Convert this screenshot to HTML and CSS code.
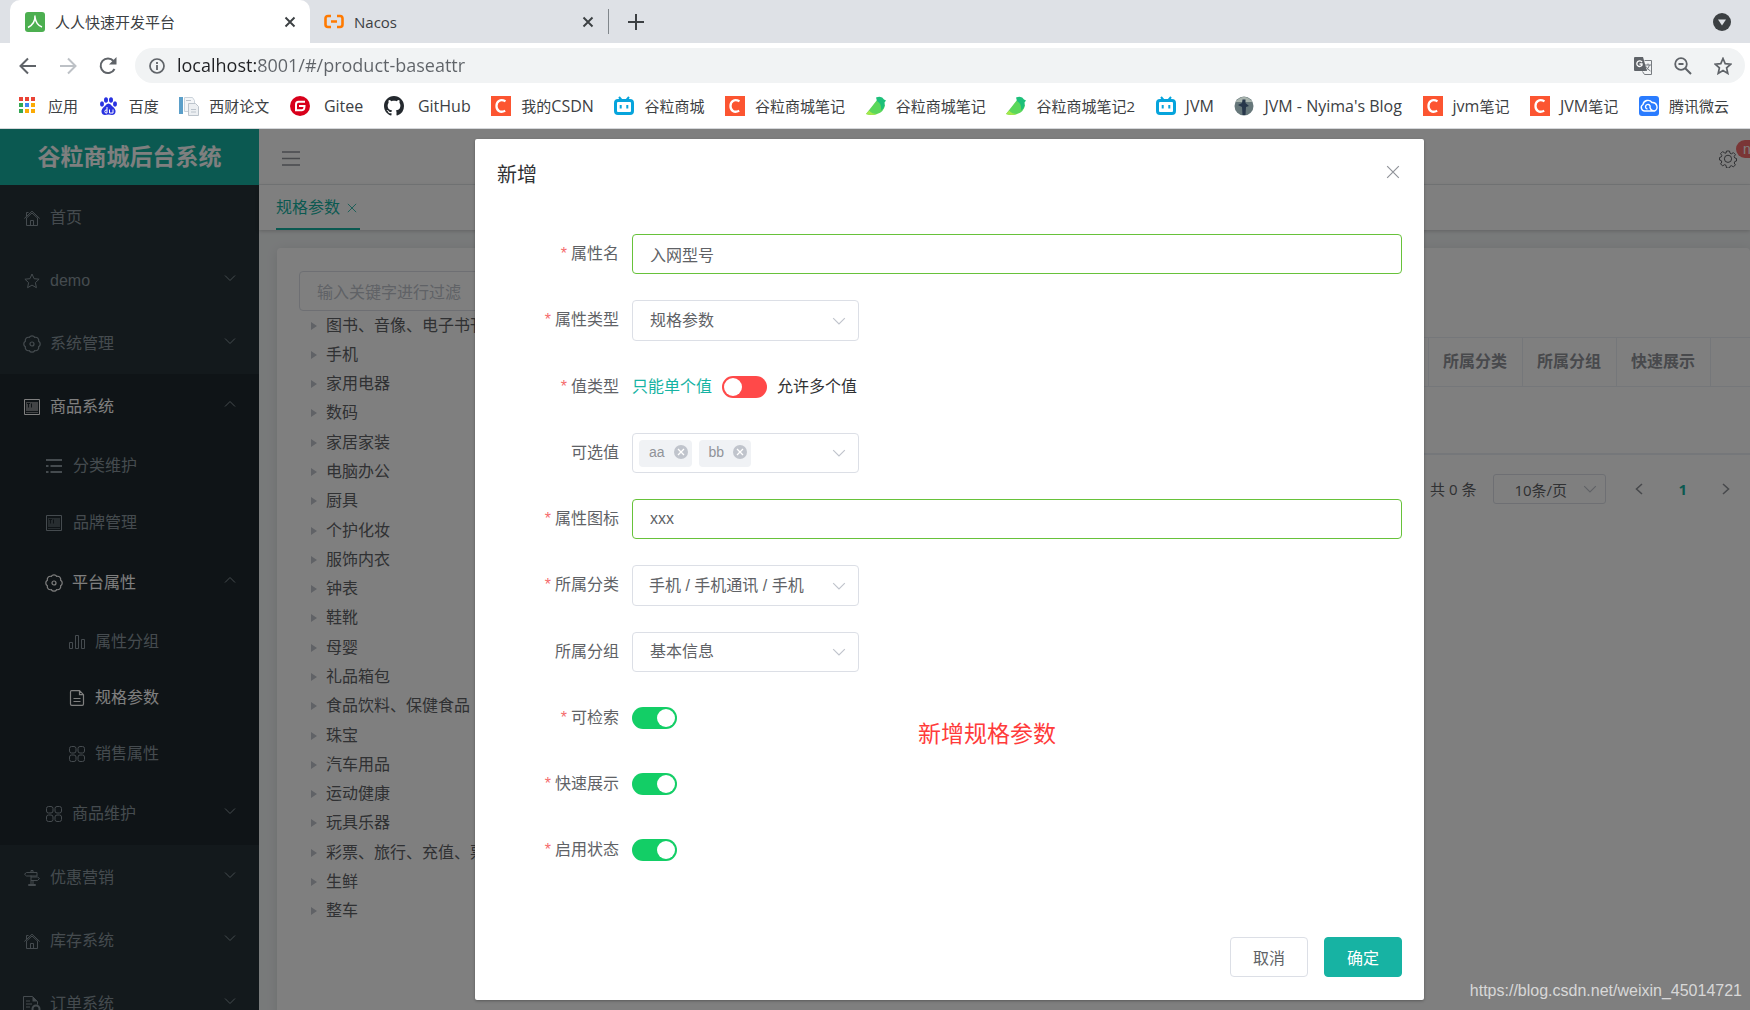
FILE: index.html
```html
<!DOCTYPE html>
<html lang="zh-CN">
<head>
<meta charset="utf-8">
<title>人人快速开发平台</title>
<link rel="stylesheet" href="styles.css">
</head>
<body>
<svg class="sprite" aria-hidden="true">
  <symbol id="chevron" viewBox="0 0 12 12"><path d="M1 3.500l5 5 5-5" fill="none" stroke="currentColor" stroke-width="1"/></symbol>
  <symbol id="cross" viewBox="0 0 12 12"><path d="M1 1l10 10M11 1L1 11" fill="none" stroke="currentColor" stroke-width="1"/></symbol>
  <symbol id="cross-bold" viewBox="0 0 12 12"><path d="M1.500 1.500l9 9M10.500 1.500l-9 9" fill="none" stroke="currentColor" stroke-width="1.900"/></symbol>
  <symbol id="home" viewBox="0 0 16 16"><path d="M.3 8.500L8 1.200l7.700 7.300M2 8.500L8 3l6 5.500M2.500 8v7.500h11V8M6.500 15.500v-5h3v5M2.500 6V2.500h2" fill="none" stroke="currentColor"/></symbol>
  <symbol id="star" viewBox="0 0 16 16"><path d="M8 1l2.100 4.700 5 .5-3.700 3.400 1 5.100L8 12.100l-4.400 2.600 1-5.100L.9 6.200l5-.5z" fill="none" stroke="currentColor"/></symbol>
  <symbol id="gear" viewBox="0 0 18 18"><path d="M15.650 11.750A3.200 3.200 0 0 1 11.750 15.650A3.200 3.200 0 0 1 6.250 15.650A3.200 3.200 0 0 1 2.350 11.750A3.200 3.200 0 0 1 2.350 6.250A3.200 3.200 0 0 1 6.250 2.350A3.200 3.200 0 0 1 11.750 2.350A3.200 3.200 0 0 1 15.650 6.250A3.200 3.200 0 0 1 15.650 11.750z" fill="none" stroke="currentColor" stroke-width="1.200"/><circle cx="9" cy="9" r="2" fill="none" stroke="currentColor" stroke-width="1.200"/></symbol>
  <symbol id="cog" viewBox="0 0 18 18"><path d="M7.500 1h3l.5 2.200 1.500.6 1.900-1.200 2 2-1.200 1.900.6 1.500 1.700.5v2.500l-1.700.5-.6 1.500 1.200 1.900-2 2-1.900-1.200-1.500.6-.5 1.700h-3L7 15.300l-1.500-.6-1.900 1.200-2-2 1.200-1.900-.6-1.500-1.700-.5V7.500L2.200 7l.6-1.500-1.200-1.900 2-2 1.900 1.200L7 3.200z" fill="none" stroke="currentColor" stroke-linejoin="round"/><circle cx="9" cy="8.800" r="3.600" fill="none" stroke="currentColor"/></symbol>
  <symbol id="news" viewBox="0 0 16 16"><path d="M.5.5h15v15H.5z" fill="none" stroke="currentColor"/><path d="M2 3h12v9H2zM2 13h12v1H2z" fill="currentColor" opacity=".45"/><path d="M3 4.500h3M4.500 5v3.500M7.500 4.500v4" stroke="#1f292e"/></symbol>
  <symbol id="list" viewBox="0 0 16 16"><path d="M0 1h16v2H0zM0 7h2.500v2H0zM4.500 7H16v2H4.500zM0 13h2.500v2H0zM4.500 13H16v2H4.500z" fill="currentColor"/></symbol>
  <symbol id="bars" viewBox="0 0 16 16"><path d="M.5 8.500h3v6h-3zM6.500 1.500h3v13h-3zM12.500 5.500h3v9h-3z" fill="none" stroke="currentColor" stroke-linejoin="round"/></symbol>
  <symbol id="doc" viewBox="0 0 16 16"><path d="M2.500.7h8l4 4V14q0 1.300-1.300 1.300H2.800Q1.500 15.300 1.500 14V2q0-1.300 1-1.300zM10.500.7v4h4M4.500 8.500h7M4.500 11.500h7" fill="none" stroke="currentColor" stroke-width="1.200"/></symbol>
  <symbol id="grid" viewBox="0 0 16 16"><g fill="none" stroke="currentColor"><rect x=".5" y=".5" width="6.500" height="6.500" rx="2"/><rect x="9" y=".5" width="6.500" height="6.500" rx="2"/><rect x=".5" y="9" width="6.500" height="6.500" rx="2"/><rect x="9" y="9" width="6.500" height="6.500" rx="2"/></g></symbol>
  <symbol id="sign" viewBox="0 0 16 16"><path d="M7 2.500V.5h2v2M7 5.500v9M9 10.500v4M4.500 15.500h7v-1h-7zM2.500 2.500H13V6H2.500L.5 4.200zM7 7h6.500l2 1.500-2 2H7" fill="none" stroke="currentColor"/></symbol>
  <symbol id="order" viewBox="0 0 18 16"><path d="M7 15.500H.5V.5h9l5 5v3M3 5h4M3 8h6M3 11h4" fill="none" stroke="currentColor"/><path d="M9.500.5v5h5z" fill="currentColor"/><circle cx="13" cy="13" r="3.500" fill="none" stroke="currentColor" stroke-width="2"/></symbol>
  <symbol id="csdn" viewBox="0 0 20 20"><path d="M0 0h20v20H0z" fill="#fc5531"/><path d="M14.500 5.200C9 2.500 5.500 5.500 5.500 10s3.500 7.300 8.700 4.800" fill="none" stroke="#fff" stroke-width="2.300"/></symbol>
  <symbol id="bili" viewBox="0 0 20 20"><rect x="1.500" y="4.500" width="17" height="13" rx="2.500" fill="none" stroke="#06a4dc" stroke-width="3"/><path d="M5 1l2.500 3M15 1l-2.500 3" stroke="#06a4dc" stroke-width="2"/><path d="M6.700 9v3.500M13.300 9v3.500" stroke="#06a4dc" stroke-width="2"/></symbol>
  <symbol id="bird" viewBox="0 0 20 20"><path d="M11 4L0 18q6 2 11 0 7-2 8-9z" fill="#5bd75b"/><path d="M10 1.500q6-2 8 2l2 1-1.500 2q1 5-3.500 8Q16 8 11 5z" fill="#1dc07a"/><path d="M3 14.500L0 18q6 2 11 0-5 0-8-3.500z" fill="#a6e84a"/></symbol>
</svg>

<header class="browser">
  <div class="tabs">
    <div class="tab tab-active">
      <svg class="favicon" viewBox="0 0 20 20"><rect width="20" height="20" rx="3" fill="#4caf50"/><path d="M10 3.500q.5 8-7 12M10 5q1 8 7 10" fill="none" stroke="#fff" stroke-width="1.500"/></svg>
      <span class="tab-title">人人快速开发平台</span>
      <button class="plain tab-close" aria-label="关闭标签页"><svg class="ico12"><use href="#cross-bold"/></svg></button>
    </div>
    <div class="tab">
      <svg class="favicon" viewBox="0 0 20 20"><path d="M7 4H4Q1.500 4 1.500 6.500v6Q1.500 15 4 15h3M13 4h3q2.500 0 2.500 2.500v6Q18.500 15 16 15h-3M7 9.500h6" fill="none" stroke="#ff7a00" stroke-width="2.600"/></svg>
      <span class="tab-title">Nacos</span>
      <button class="plain tab-close" aria-label="关闭标签页"><svg class="ico12"><use href="#cross-bold"/></svg></button>
    </div>
    <span class="tab-rule"></span>
    <button class="plain new-tab" aria-label="新标签页"><svg width="16" height="16"><path d="M8 0v16M0 8h16" stroke="#3c4043" stroke-width="2"/></svg></button>
    <button class="plain tab-search" aria-label="搜索标签页"><svg width="18" height="18"><circle cx="9" cy="9" r="9" fill="#3c4043"/><path d="M5 6.500h8L9 12.500z" fill="#dee1e6"/></svg></button>
  </div>
  <div class="toolbar">
    <button class="plain nav-btn" aria-label="后退"><svg width="18" height="18"><path d="M17 9H2M9 1.500L1.500 9 9 16.500" fill="none" stroke="#5f6368" stroke-width="2"/></svg></button>
    <button class="plain nav-btn" aria-label="前进"><svg width="18" height="18"><path d="M1 9h15M9 1.500L16.500 9 9 16.500" fill="none" stroke="#bdc1c6" stroke-width="2"/></svg></button>
    <button class="plain nav-btn" aria-label="重新加载"><svg width="18" height="18"><path d="M15.500 12A7.300 7.300 0 1 1 14.500 4" fill="none" stroke="#5f6368" stroke-width="2"/><path d="M17.500 0v7.500H10z" fill="#5f6368"/></svg></button>
    <div class="omnibox">
      <svg width="16" height="16"><circle cx="8" cy="8" r="7" fill="none" stroke="#5f6368" stroke-width="1.700"/><path d="M8 7v5M8 4v2" stroke="#5f6368" stroke-width="1.800"/></svg>
      <input class="url" aria-label="地址" value="localhost:8001/#/product-baseattr">
      <button class="plain" aria-label="翻译"><svg width="18" height="18"><path d="M1 0h8l4 14H1Q0 14 0 13V1Q0 0 1 0z" fill="#5f6368"/><path d="M8 5.200A2.800 2.800 0 1 0 8 8.200V7H5.500" fill="none" stroke="#fff" stroke-width="1.300"/><path d="M10.500 3.500h7v14h-7l-2-3M11 8h6M14 6.500V8M15.500 8q-1 4-4 5.500M12 9.500q1.500 3 4.500 4.500" fill="none" stroke="#777b80"/></svg></button>
      <button class="plain" aria-label="缩放"><svg width="18" height="18"><circle cx="7" cy="7" r="5.800" fill="none" stroke="#5f6368" stroke-width="1.800"/><path d="M11.200 11.200L17 17M4.500 7h5" stroke="#5f6368" stroke-width="2"/></svg></button>
      <button class="plain" aria-label="收藏"><svg width="18" height="18" viewBox="0 0 18 18"><path d="M9 1.500l2.200 5.200 5.600.5-4.200 3.700 1.200 5.500L9 13.500l-4.800 2.900 1.200-5.500L1.200 7.200l5.600-.5z" fill="none" stroke="#5f6368" stroke-width="1.700"/></svg></button>
    </div>
  </div>
  <nav class="bookmarks" aria-label="书签">
    <a href="#"><svg width="20" height="20"><path d="M1 1h4v4H1zM7 1h4v4H7zM13 1h4v4h-4z" fill="#ea4335"/><path d="M1 7h4v4H1zM1 13h4v4H1z" fill="#34a853"/><path d="M7 7h4v4H7z" fill="#4285f4"/><path d="M13 7h4v4h-4zM7 13h4v4H7zM13 13h4v4h-4z" fill="#fbab05"/></svg>应用</a>
    <a href="#"><svg width="20" height="20"><g fill="#2932e1"><ellipse cx="3" cy="8" rx="2" ry="2.700"/><ellipse cx="7" cy="4" rx="2" ry="2.800"/><ellipse cx="12" cy="4" rx="2" ry="2.800"/><ellipse cx="16" cy="8" rx="2" ry="2.700"/><path d="M9.500 7.500q2 0 3.500 2.500 4 3 3.500 6T13 19q-3.500-.8-7 0-3 0-3.500-3T6 10q1.500-2.500 3.500-2.500z"/></g><path d="M8 11v6H6.500q-1.500-1.500 0-3H8M10.500 13.500V17H14v-3.500" fill="none" stroke="#fff"/></svg>百度</a>
    <a href="#"><svg width="20" height="20"><path d="M0 1h4v17H0z" fill="#5b9fc9"/><path d="M5.500 1.500h8l2 3v11h-10z" fill="#f4f6f8" stroke="#cbd3db"/><path d="M9.500 7.500h7l3 3v9h-10z" fill="#eceff2" stroke="#bcc4cc"/><path d="M12 13.500h5M12 16h5M7 4.500h5" stroke="#bcc4cc"/></svg>西财论文</a>
    <a href="#"><svg width="20" height="20"><circle cx="10" cy="10" r="10" fill="#d8001b"/><path d="M15 5.800H8.500Q6 5.800 6 8.500v5.700h6Q14.500 14.200 14.500 10H9" fill="none" stroke="#fff" stroke-width="2"/></svg><span class="en pad">Gitee</span></a>
    <a href="#"><svg width="20" height="20" viewBox="0 0 16 16"><path fill="#24292e" d="M8 0C3.580 0 0 3.580 0 8c0 3.540 2.290 6.530 5.470 7.590.4.070.55-.17.55-.38 0-.19-.01-.82-.01-1.490-2.010.37-2.530-.49-2.690-.94-.09-.23-.48-.94-.82-1.130-.28-.15-.68-.52-.01-.53.63-.01 1.080.58 1.230.82.72 1.210 1.870.87 2.330.66.070-.52.28-.87.51-1.070-1.780-.2-3.640-.89-3.640-3.950 0-.87.31-1.590.82-2.150-.08-.2-.36-1.020.08-2.120 0 0 .67-.21 2.200.82.64-.18 1.320-.27 2-.27s1.360.09 2 .27c1.530-1.040 2.200-.82 2.200-.82.44 1.100.16 1.920.08 2.120.51.56.82 1.270.82 2.150 0 3.070-1.870 3.750-3.650 3.950.29.25.54.73.54 1.480 0 1.070-.01 1.930-.01 2.200 0 .21.15.46.55.38A8.010 8.010 0 0 0 16 8c0-4.420-3.580-8-8-8z"/></svg><span class="en pad">GitHub</span></a>
    <a href="#"><svg width="20" height="20"><use href="#csdn"/></svg><span>我的<span class="en">CSDN</span></span></a>
    <a href="#"><svg width="20" height="20"><use href="#bili"/></svg>谷粒商城</a>
    <a href="#"><svg width="20" height="20"><use href="#csdn"/></svg>谷粒商城笔记</a>
    <a href="#"><svg width="20" height="20"><use href="#bird"/></svg>谷粒商城笔记</a>
    <a href="#"><svg width="20" height="20"><use href="#bird"/></svg>谷粒商城笔记2</a>
    <a href="#"><svg width="20" height="20"><use href="#bili"/></svg><span class="en">JVM</span></a>
    <a href="#"><svg width="20" height="20"><circle cx="10" cy="10" r="9.500" fill="#66777a"/><path d="M1.500 6Q10-4 18.500 6z" fill="#a9b4ae"/><path d="M8.500 3.500h3V7l3.500 3-3 1-.5 8h-3L8 11 4 9l4-2z" fill="#27364a"/></svg><span class="en">JVM - Nyima's Blog</span></a>
    <a href="#"><svg width="20" height="20"><use href="#csdn"/></svg><span><span class="en">jvm</span>笔记</span></a>
    <a href="#"><svg width="20" height="20"><use href="#csdn"/></svg><span><span class="en">JVM</span>笔记</span></a>
    <a href="#"><svg width="20" height="20"><rect width="20" height="20" rx="3" fill="#2a7cff"/><path d="M15 15H6A3.500 3.500 0 0 1 4 8.500 5 5 0 0 1 13 6.500 4.500 4.500 0 0 1 15.500 15Q12 15 11 11.500A2.300 2.300 0 1 0 8.500 13" fill="none" stroke="#fff" stroke-width="1.400"/></svg>腾讯微云</a>
  </nav>
</header>

<div class="app">
  <aside class="sidebar">
    <h1 class="brand">谷粒商城后台系统</h1>
    <ul class="menu">
      <li><a href="#"><svg class="ico"><use href="#home"/></svg>首页</a></li>
      <li><a href="#"><svg class="ico"><use href="#star"/></svg>demo<svg class="arrow"><use href="#chevron"/></svg></a></li>
      <li><a href="#"><svg class="ico ico-lg"><use href="#gear"/></svg>系统管理<svg class="arrow"><use href="#chevron"/></svg></a></li>
      <li class="open"><a href="#" class="lit"><svg class="ico"><use href="#news"/></svg>商品系统<svg class="arrow up"><use href="#chevron"/></svg></a>
        <ul class="level2">
          <li><a href="#" class="leaf"><svg class="ico"><use href="#list"/></svg>分类维护</a></li>
          <li><a href="#" class="leaf"><svg class="ico"><use href="#news"/></svg>品牌管理</a></li>
          <li><a href="#" class="lit"><svg class="ico ico-lg"><use href="#gear"/></svg>平台属性<svg class="arrow up"><use href="#chevron"/></svg></a>
            <ul class="level3">
              <li><a href="#"><svg class="ico"><use href="#bars"/></svg>属性分组</a></li>
              <li><a href="#" class="lit"><svg class="ico"><use href="#doc"/></svg>规格参数</a></li>
              <li><a href="#"><svg class="ico"><use href="#grid"/></svg>销售属性</a></li>
            </ul>
          </li>
          <li><a href="#"><svg class="ico"><use href="#grid"/></svg>商品维护<svg class="arrow"><use href="#chevron"/></svg></a></li>
        </ul>
      </li>
      <li><a href="#"><svg class="ico"><use href="#sign"/></svg>优惠营销<svg class="arrow"><use href="#chevron"/></svg></a></li>
      <li><a href="#"><svg class="ico"><use href="#home"/></svg>库存系统<svg class="arrow"><use href="#chevron"/></svg></a></li>
      <li><a href="#"><svg class="ico ico-lg"><use href="#order"/></svg>订单系统<svg class="arrow"><use href="#chevron"/></svg></a></li>
    </ul>
  </aside>

  <div class="main">
    <div class="navbar">
      <button class="plain" aria-label="折叠菜单"><svg width="18" height="15"><path d="M0 1h18M0 7.500h18M0 14h18" stroke="#909399" stroke-width="1.500"/></svg></button>
      <button class="plain settings" aria-label="设置"><svg width="18" height="18"><use href="#cog"/></svg><span class="badge">new</span></button>
    </div>
    <div class="page-tabs">
      <a href="#" class="page-tab">规格参数<svg class="ico10"><use href="#cross"/></svg></a>
    </div>
    <div class="card">
      <div class="tree-pane">
        <input class="box filter" aria-label="过滤" placeholder="输入关键字进行过滤">
        <ul class="tree">
          <li>图书、音像、电子书刊</li><li>手机</li><li>家用电器</li><li>数码</li><li>家居家装</li><li>电脑办公</li><li>厨具</li><li>个护化妆</li><li>服饰内衣</li><li>钟表</li><li>鞋靴</li><li>母婴</li><li>礼品箱包</li><li>食品饮料、保健食品</li><li>珠宝</li><li>汽车用品</li><li>运动健康</li><li>玩具乐器</li><li>彩票、旅行、充值、票务</li><li>生鲜</li><li>整车</li>
        </ul>
      </div>
      <div class="table-pane">
        <table class="attrs">
          <thead><tr><th></th><th class="col">所属分类</th><th class="col">所属分组</th><th class="col">快速展示</th><th class="rest"></th></tr></thead>
          <tbody><tr><td colspan="5"></td></tr></tbody>
        </table>
        <div class="pager">
          <span>共 0 条</span>
          <span class="select-wrap"><select class="page-size" aria-label="每页条数"><option>10条/页</option></select><svg class="caret"><use href="#chevron"/></svg></span>
          <button class="plain" aria-label="上一页"><svg width="8" height="12"><path d="M7 1L1.500 6 7 11" fill="none" stroke="#909399" stroke-width="1.600"/></svg></button>
          <button class="plain current">1</button>
          <button class="plain" aria-label="下一页"><svg width="8" height="12"><path d="M1 1l5.500 5L1 11" fill="none" stroke="#909399" stroke-width="1.600"/></svg></button>
        </div>
      </div>
    </div>
  </div>

  <div class="overlay">
    <form class="dialog" role="dialog" aria-labelledby="dlg-title">
      <div class="dialog-head">
        <h2 id="dlg-title">新增</h2>
        <button type="button" class="plain close" aria-label="关闭"><svg class="ico14"><use href="#cross"/></svg></button>
      </div>
      <div class="fields">
        <label class="req" for="f-name">属性名</label>
        <input class="box valid" id="f-name" value="入网型号">

        <label class="req" for="f-type">属性类型</label>
        <span class="select-wrap"><select class="box tall" id="f-type"><option>规格参数</option></select><svg class="caret"><use href="#chevron"/></svg></span>

        <label class="req" for="f-multi">值类型</label>
        <span class="switch-row"><span class="chosen">只能单个值</span><input type="checkbox" class="switch" id="f-multi"><span>允许多个值</span></span>

        <label for="f-values">可选值</label>
        <span class="select-wrap">
          <span class="box tags">
            <span class="tag">aa<button type="button" class="plain" aria-label="移除 aa"><svg width="14" height="14"><circle cx="7" cy="7" r="7" fill="#c0c4cc"/><path d="M4 4l6 6M10 4l-6 6" stroke="#fff" stroke-width="1.300"/></svg></button></span>
            <span class="tag">bb<button type="button" class="plain" aria-label="移除 bb"><svg width="14" height="14"><circle cx="7" cy="7" r="7" fill="#c0c4cc"/><path d="M4 4l6 6M10 4l-6 6" stroke="#fff" stroke-width="1.300"/></svg></button></span>
            <input class="tag-input" id="f-values">
          </span><svg class="caret"><use href="#chevron"/></svg></span>

        <label class="req" for="f-icon">属性图标</label>
        <input class="box valid" id="f-icon" value="xxx">

        <label class="req" for="f-cat">所属分类</label>
        <span class="select-wrap"><input class="box tall cascader" id="f-cat" readonly value="手机 / 手机通讯 / 手机"><svg class="caret"><use href="#chevron"/></svg></span>

        <label for="f-group">所属分组</label>
        <span class="select-wrap"><select class="box" id="f-group"><option>基本信息</option></select><svg class="caret"><use href="#chevron"/></svg></span>

        <label class="req" for="f-search">可检索</label>
        <span class="switch-row"><input type="checkbox" class="switch" id="f-search" checked></span>

        <label class="req" for="f-show">快速展示</label>
        <span class="switch-row"><input type="checkbox" class="switch" id="f-show" checked></span>

        <label class="req" for="f-enable">启用状态</label>
        <span class="switch-row"><input type="checkbox" class="switch" id="f-enable" checked></span>
      </div>
      <div class="dialog-foot">
        <button type="button" class="btn">取消</button>
        <button type="button" class="btn primary">确定</button>
      </div>
      <p class="note">新增规格参数</p>
    </form>
  </div>
  <span class="watermark">https://blog.csdn.net/weixin_45014721</span>
</div>
</body>
</html>
```
FILE: styles.css
```css
* { box-sizing: border-box; }

body {
  margin: 0;
  height: 100vh;
  display: flex;
  flex-direction: column;
  overflow: hidden;
  font: 16px/24px "Liberation Sans", "Noto Sans CJK SC", sans-serif;
  color: #303133;
}

ul, h1, h2, p { margin: 0; padding: 0; list-style: none; }
a { color: inherit; text-decoration: none; }
input, select, button { font: inherit; color: inherit; }
svg { display: block; flex: none; }

.sprite { position: absolute; width: 0; height: 0; }
.plain { display: block; flex: none; border: 0; padding: 0; background: none; }
.ico10 { width: 10px; height: 10px; }
.ico12 { width: 12px; height: 12px; }
.ico14 { width: 14px; height: 14px; }

/* Browser frame */
.browser {
  flex: none;
  background: #fff;
  border-bottom: 1px solid #d5d7da;
  font-family: "Open Sans", "Noto Sans CJK SC", sans-serif;
  color: #3c4043;
}
.tabs {
  display: flex;
  align-items: center;
  height: 43px;
  padding: 0 19px 0 10px;
  background: #dee1e6;
  font-size: 15px;
}
.tab {
  display: flex;
  align-items: center;
  width: 298px;
  height: 43px;
  padding: 0 12px 0 14px;
}
.tab-active { width: 300px; padding-left: 15px; background: #fff; border-radius: 10px 10px 0 0; }
.favicon { width: 20px; height: 20px; }
.tab-title { flex: 1; padding-left: 10px; }
.tab-close { padding: 2px; color: #3c4043; }
.tab-rule { width: 1px; height: 25px; background: #80868b; }
.new-tab { margin-left: 19px; }
.tab-search { margin-left: auto; }

.toolbar {
  display: flex;
  align-items: center;
  gap: 22px;
  padding: 5px 5px 5px 19px;
}
.omnibox {
  display: flex;
  align-items: center;
  flex: 1;
  gap: 22px;
  height: 35px;
  margin-left: -4px;
  padding: 0 13px 0 14px;
  border-radius: 18px;
  background: #f1f3f4;
}
.url {
  flex: 1;
  margin-left: -10px;
  padding: 0 0 2px;
  border: 0;
  outline: 0;
  font-size: 18px;
  color: transparent;
  background: linear-gradient(90deg, #202124 80px, #5f6368 80px);
  background-clip: text;
  -webkit-background-clip: text;
}
.bookmarks {
  display: flex;
  align-items: center;
  justify-content: space-between;
  height: 40px;
  padding: 0 21px 4px 18px;
  font-size: 15px;
  white-space: nowrap;
}
.bookmarks a { display: flex; align-items: center; gap: 10px; }
.en { font-size: 16px; }
.pad { padding-left: 4px; }

/* Application shell */
.app {
  position: relative;
  display: flex;
  flex: 1;
  min-height: 0;
  overflow: hidden;
  background: #f1f4f5;
}
.sidebar { flex: none; width: 259px; background: #263238; color: #8a979e; }
.brand {
  height: 56px;
  background: #17b3a3;
  color: #fff;
  font-size: 23px;
  line-height: 56px;
  text-align: center;
}
.menu a { display: flex; align-items: center; height: 63px; padding: 2px 23px 0 24px; }
.menu .level2 a { padding: 0 23px 0 46px; }
.menu .level2 .leaf { height: 57px; }
.menu .level3 a { height: 56px; padding-left: 69px; }
.menu .lit { color: #fff; }
.menu .open { background: #1f292e; }
.ico { width: 16px; height: 16px; margin-right: 10px; }
.ico-lg { width: 18px; height: 18px; margin: 0 9px 0 -1px; }
.level2 .leaf .ico { margin-right: 11px; }
.arrow { width: 12px; height: 12px; margin: 0 0 6px auto; color: #8a979e; }
.up { transform: scaleY(-1); }

.main { flex: 1; min-width: 0; }
.navbar {
  display: flex;
  align-items: center;
  justify-content: space-between;
  height: 56px;
  padding: 4px 13px 0 23px;
  background: #fff;
  border-bottom: 1px solid #ebeef0;
}
.settings { position: relative; color: #606266; }
.badge {
  position: absolute;
  top: -10px;
  left: 17px;
  padding: 0 7px;
  border-radius: 9px;
  background: #f56c6c;
  color: #fff;
  font-size: 14px;
  line-height: 18px;
}
.page-tabs {
  height: 45px;
  padding: 0 17px;
  background: #fff;
  box-shadow: 0 1px 4px rgba(0, 0, 0, .2);
}
.page-tab {
  display: inline-flex;
  align-items: center;
  gap: 7px;
  height: 45px;
  padding: 2px 3px 0 0;
  border-bottom: 2px solid #17b3a3;
  color: #17b3a3;
}
.card {
  display: flex;
  height: 900px;
  margin: 18px 0 0 18px;
  padding: 23px 0 0 22px;
  border-radius: 4px;
  background: #fff;
  box-shadow: 0 2px 12px rgba(0, 0, 0, .1);
}
.tree-pane { width: 22%; }
.tree {
  display: grid;
  grid-auto-rows: 1fr;
  height: 615px;
  align-items: center;
  padding-left: 12px;
  color: #606266;
  white-space: nowrap;
}
.tree li { display: flex; align-items: center; gap: 9px; }
.tree li::before {
  content: "";
  border: 5px solid transparent;
  border-width: 4px 0 4px 6px;
  border-left-color: #c0c4cc;
}
.table-pane { flex: 1; margin-left: 24px; padding-top: 66px; }
.attrs { width: 100%; table-layout: fixed; border-collapse: collapse; border: solid #ebeef5; border-width: 1px 0 2px 1px; }
.attrs th { height: 49px; border: 1px solid #ebeef5; padding: 0; color: #909399; font-weight: 700; }
.attrs td { height: 67px; padding: 0; }
.attrs .col { width: 94px; }
.attrs .rest { width: 40px; border-right: 0; }
.pager {
  display: flex;
  justify-content: flex-end;
  align-items: center;
  margin-top: 19px;
  padding-right: 20px;
  color: #606266;
  font: 15px/30px "Open Sans", "Noto Sans CJK SC", sans-serif;
}
.pager > .plain { margin-left: 35px; }
.pager .select-wrap { width: 113px; margin-left: 17px; margin-right: -6px; }
.page-size {
  appearance: none;
  width: 100%;
  height: 30px;
  padding: 0 20px;
  border: 1px solid #dcdfe6;
  border-radius: 3px;
  background: #fff;
}
.pager .caret { right: 9px; }
.pager .current { color: #17b3a3; font-weight: 700; }

/* Shared form controls */
.box {
  display: block;
  width: 100%;
  height: 40px;
  padding: 0 17px;
  border: 1px solid #dcdfe6;
  border-radius: 4px;
  outline: 0;
  background: #fff;
  color: #606266;
  appearance: none;
}
.box::placeholder { color: #c0c4cc; }
.filter { padding-top: 3px; }
.tall { height: 41px; }
.cascader { padding: 0 16px 4px; }
.valid { border-color: #67c23a; }
.select-wrap { position: relative; display: block; width: 227px; }
.caret { position: absolute; right: 13px; top: calc(50% - 7px); width: 14px; height: 14px; color: #c0c4cc; pointer-events: none; }

/* Dialog */
.overlay {
  position: absolute;
  inset: 0;
  padding: 10px 326px 10px 475px;
  background: rgba(0, 0, 0, .5);
}
.dialog {
  position: relative;
  padding: 24px 22px 23px;
  border-radius: 2px;
  background: #fff;
  box-shadow: 0 1px 3px rgba(0, 0, 0, .3);
}
.dialog-head { display: flex; justify-content: space-between; align-items: flex-start; padding-bottom: 47px; }
.dialog-head h2 { font-size: 20px; font-weight: 400; }
.close { padding: 2px; color: #909399; }
.fields {
  display: grid;
  grid-template-columns: 122px 1fr;
  gap: 26px 13px;
}
.fields label { text-align: right; line-height: 40px; color: #606266; }
.req::before { content: "*"; margin-right: 4px; color: #f56c6c; }
.switch-row { display: flex; align-items: center; gap: 10px; height: 40px; }
.chosen { color: #17b3a3; }
.switch {
  appearance: none;
  width: 45px;
  height: 22px;
  margin: 0;
  padding: 2px;
  border-radius: 11px;
  background: #ff4949;
}
.switch::before {
  content: "";
  display: block;
  width: 18px;
  height: 18px;
  border-radius: 50%;
  background: #fff;
}
.switch:checked { background: #13ce66; }
.switch:checked::before { margin-left: auto; }
.tags { display: flex; align-items: center; gap: 7px; padding: 0 6px; }
.tag {
  display: flex;
  align-items: center;
  gap: 9px;
  height: 27px;
  padding: 0 4px 2px 10px;
  border-radius: 4px;
  background: #f0f2f5;
  color: #909399;
  font-size: 14px;
}
.tag-input { flex: 1; min-width: 0; border: 0; outline: 0; }
.dialog-foot { display: flex; justify-content: flex-end; gap: 16px; padding-top: 67px; }
.btn {
  min-width: 78px;
  height: 40px;
  padding: 3px 22px 0;
  border: 1px solid #dcdfe6;
  border-radius: 4px;
  background: #fff;
  color: #606266;
}
.primary { border-color: #17b3a3; background: #17b3a3; color: #fff; }
.note {
  position: absolute;
  left: 443px;
  top: 579px;
  font-size: 23px;
  line-height: 32px;
  color: #ff3b3b;
}
.watermark {
  position: absolute;
  right: 8px;
  bottom: 7px;
  color: rgba(255, 255, 255, .7);
  font-size: 16px;
}
```
